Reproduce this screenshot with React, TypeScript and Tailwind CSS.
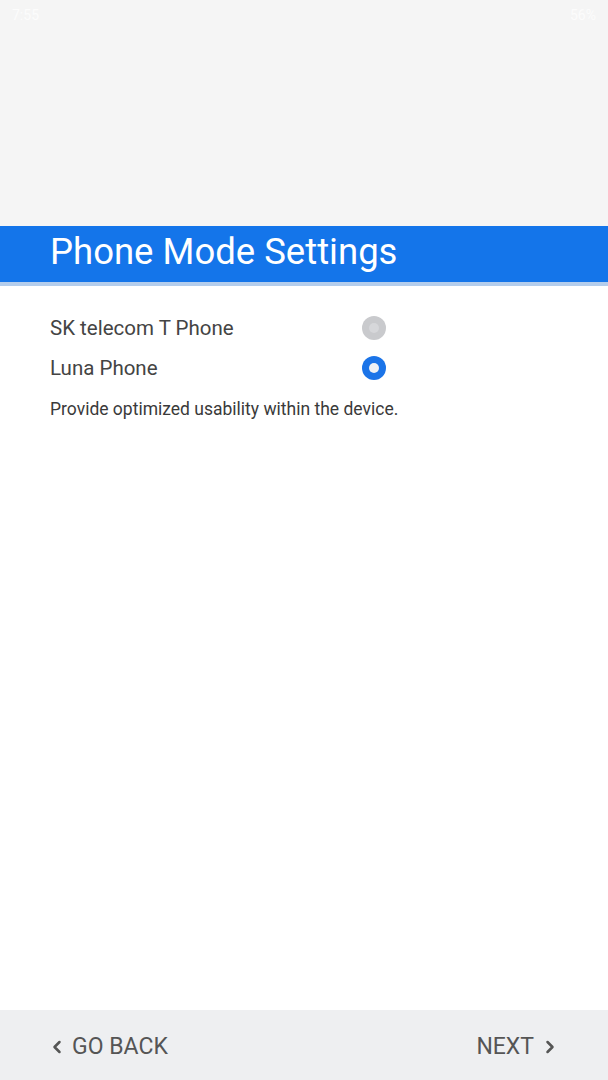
import { ChevronLeft, ChevronRight } from 'lucide-react'

function Radio({ checked }: { checked: boolean }) {
  return checked ? (
    <span className="flex h-6 w-6 items-center justify-center rounded-full bg-[#1b74e8]">
      <span className="h-[10px] w-[10px] rounded-full bg-[#eef1f5]" />
    </span>
  ) : (
    <span className="flex h-6 w-6 items-center justify-center rounded-full bg-[#c9cacd]">
      <span className="h-[10px] w-[10px] rounded-full bg-[#d6d7da]" />
    </span>
  )
}

export default function App() {
  const options = [
    { label: 'SK telecom T Phone', checked: false },
    { label: 'Luna Phone', checked: true },
  ]

  return (
    <div className="flex h-[1080px] w-[608px] flex-col bg-white font-['Roboto',sans-serif]">
      {/* status bar + header space */}
      <div className="flex h-[226px] flex-col bg-[#f5f5f5]">
        <div className="flex h-[30px] items-center justify-between px-3 text-[14px] text-[#fcfcfc]">
          <span>7:55</span>
          <span>56%</span>
        </div>
      </div>

      {/* title bar */}
      <div className="flex h-[56px] items-center bg-[#1475ea] pl-[50px]">
        <h1 className="-mt-[3px] text-[36.5px] leading-none text-white">Phone Mode Settings</h1>
      </div>
      <div className="h-[4px] bg-[#b4cdec]" />

      {/* options */}
      <div className="flex flex-1 flex-col pl-[50px] pt-[22px]">
        {options.map((o) => (
          <div key={o.label} className="flex h-[40px] w-[336px] items-center justify-between">
            <span className="text-[20.5px] text-[#444]">{o.label}</span>
            <Radio checked={o.checked} />
          </div>
        ))}
        <p className="mt-[8px] text-[17.5px] text-[#3a3a3a]">Provide optimized usability within the device.</p>
      </div>

      {/* footer */}
      <div className="flex h-[70px] items-center justify-between bg-[#eeeff1] pl-[47px] pr-[48px] pt-[4px] text-[23px] text-[#555]">
        <button className="flex items-center gap-[5px]">
          <ChevronLeft size={20} strokeWidth={3} />
          <span>GO BACK</span>
        </button>
        <button className="flex items-center gap-[6px]">
          <span>NEXT</span>
          <ChevronRight size={20} strokeWidth={3} />
        </button>
      </div>
    </div>
  )
}
